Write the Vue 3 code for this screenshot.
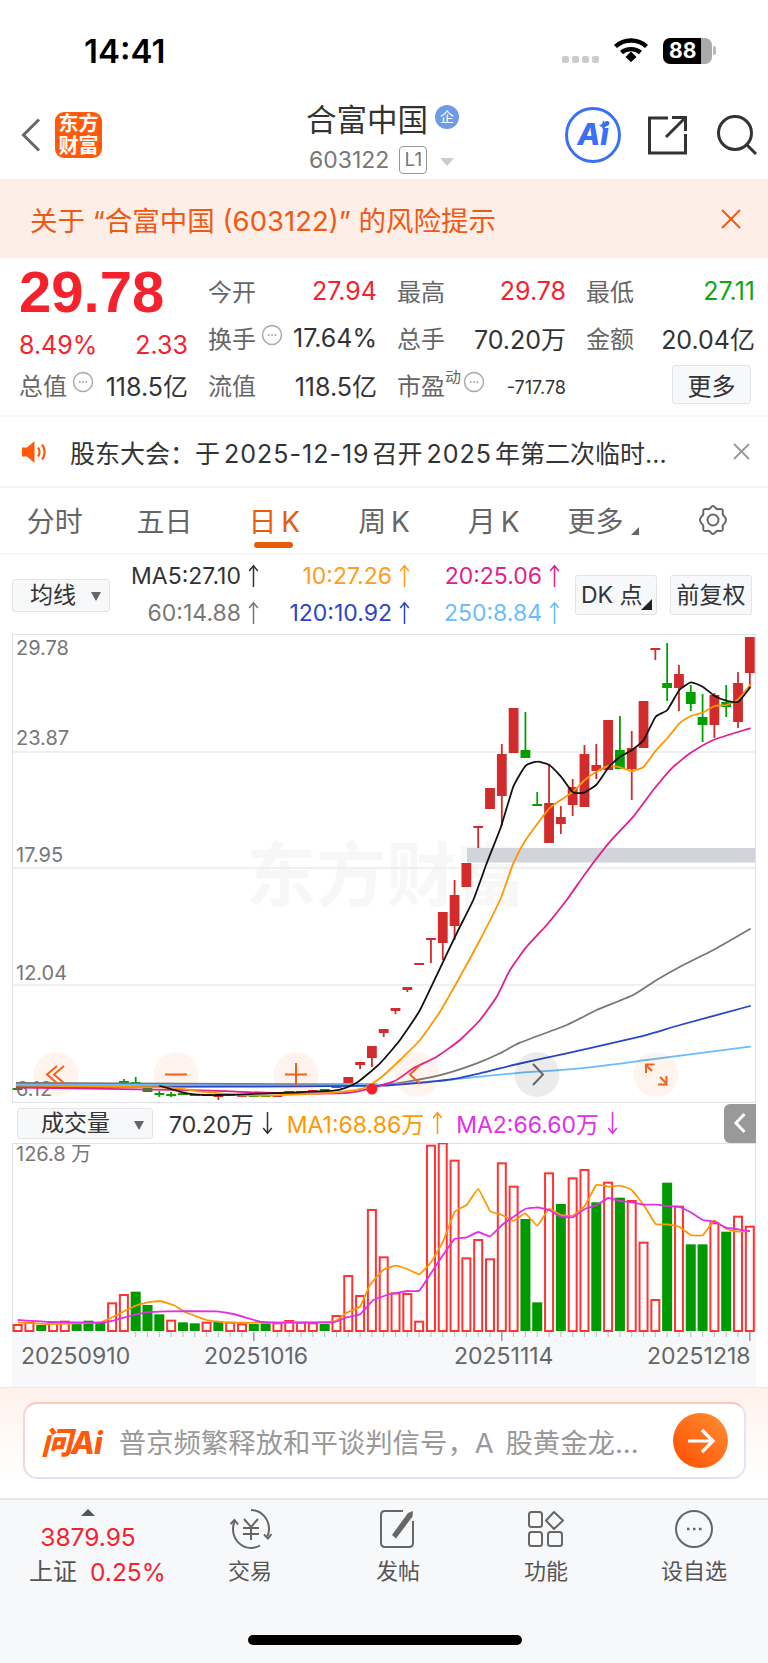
<template>
  <div class="page">
    <!-- 状态栏 -->
    <div class="status-bar">
      <span class="clock">14:41</span>
      <div class="status-right">
        <div class="signal"><i></i><i></i><i></i><i></i></div>
        <svg class="wifi" viewBox="0 0 34 24" width="34" height="24">
          <path d="M1.5 8.5C10 .5 24 .5 32.5 8.5" fill="none" stroke="#000" stroke-width="4.4" />
          <path d="M7.5 14.5C12.5 10 21.5 10 26.5 14.5" fill="none" stroke="#000" stroke-width="4.4" />
          <path d="M11.5 19 17 13.5 22.5 19 17 24.2Z" fill="#000" />
        </svg>
        <div class="battery"><span>88</span></div>
        <div class="battery-tip"></div>
      </div>
    </div>

    <!-- 顶部导航 -->
    <div class="nav">
      <div class="nav-left">
        <svg width="20" height="34" viewBox="0 0 20 34">
          <path d="M18 1.5 2.5 17 18 32.5" fill="none" stroke="#666" stroke-width="3" />
        </svg>
        <div class="brand">东方<br />财富</div>
      </div>
      <div class="nav-title">
        <div class="stock-name">
          合富中国<span class="badge-qi">企</span>
        </div>
        <div class="stock-code">
          603122<span class="badge-l1">L1</span><i class="code-tri"></i>
        </div>
      </div>
      <div class="nav-right">
        <div class="ai-btn">
          <span>Ai</span>
          <svg class="ai-star" width="9" height="11" viewBox="0 0 9 11"><path d="M4.5 0 6 4 9 5.500 6 7 4.500 11 3 7 0 5.500 3 4Z" fill="#3b6ff5" /></svg>
        </div>
        <svg class="share" width="40" height="40" viewBox="0 0 40 40">
          <path d="M21 3H2.500V38H38.500V19M19 22 38 3M25 2.500H38.500V16" fill="none" stroke="#333" stroke-width="3" />
        </svg>
        <svg class="search" width="42" height="42" viewBox="0 0 42 42">
          <circle cx="19" cy="19" r="16.500" fill="none" stroke="#333" stroke-width="3" />
          <path d="M31 31 40 40" stroke="#333" stroke-width="3" />
        </svg>
      </div>
    </div>

    <!-- 风险提示 -->
    <div class="risk">
      <span>关于 “合富中国 (603122)” 的风险提示</span>
      <svg width="20" height="20" viewBox="0 0 20 20">
        <path d="M1 1 19 19M19 1 1 19" stroke="#ee5a14" stroke-width="2" />
      </svg>
    </div>

    <!-- 行情数据 -->
    <div class="quote">
      <div class="price">29.78</div>
      <div class="cell"><span class="lb">今开</span><span class="red">27.94</span></div>
      <div class="cell"><span class="lb">最高</span><span class="red">29.78</span></div>
      <div class="cell"><span class="lb">最低</span><span class="green">27.11</span></div>

      <div class="cell change"><span class="red">8.49%</span><span class="red">2.33</span></div>
      <div class="cell">
        <span class="lb">换手<svg class="dots" width="22" height="22" viewBox="0 0 22 22"><circle cx="11" cy="11" r="9.500" fill="none" stroke="#aaa" stroke-width="1.500" /><path d="M7 11h1.500M10.300 11h1.500M13.600 11h1.500" stroke="#888" stroke-width="1.500" /></svg></span>
        <span class="val">17.64%</span>
      </div>
      <div class="cell"><span class="lb">总手</span><span class="val">70.20万</span></div>
      <div class="cell"><span class="lb">金额</span><span class="val">20.04亿</span></div>

      <div class="cell">
        <span class="lb">总值<svg class="dots" width="22" height="22" viewBox="0 0 22 22"><circle cx="11" cy="11" r="9.500" fill="none" stroke="#aaa" stroke-width="1.500" /><path d="M7 11h1.500M10.300 11h1.500M13.600 11h1.500" stroke="#888" stroke-width="1.500" /></svg></span>
        <span class="val">118.5亿</span>
      </div>
      <div class="cell"><span class="lb">流值</span><span class="val">118.5亿</span></div>
      <div class="cell">
        <span class="lb">市盈<sup>动</sup><svg class="dots tight" width="22" height="22" viewBox="0 0 22 22"><circle cx="11" cy="11" r="9.500" fill="none" stroke="#aaa" stroke-width="1.500" /><path d="M7 11h1.500M10.300 11h1.500M13.600 11h1.500" stroke="#888" stroke-width="1.500" /></svg></span>
        <span class="val small">-717.78</span>
      </div>
      <div class="cell end"><button class="more-btn">更多</button></div>
    </div>

    <!-- 公告 -->
    <div class="notice">
      <svg width="27" height="24" viewBox="0 0 27 24">
        <path d="M0 7.500H5L12.500 1V23L5 16.500H0Z" fill="#ff5a0a" />
        <path d="M16 7.500C18 10 18 14 16 16.500M20 4.500C23.500 8.500 23.500 15.500 20 19.500" fill="none" stroke="#ff5a0a" stroke-width="2.200" />
      </svg>
      <span class="notice-text">股东大会：于<b>2025-12-19</b>召开<b>2025</b>年第二次临时...</span>
      <svg width="17" height="17" viewBox="0 0 17 17">
        <path d="M1 1 16 16M16 1 1 16" stroke="#999" stroke-width="1.800" />
      </svg>
    </div>

    <!-- 周期切换 -->
    <div class="tabs">
      <div v-for="t in tabs" :key="t" class="tab" :class="{ active: t === '日 K' }">{{ t }}</div>
      <div class="tab more">更多<i class="corner"></i></div>
      <div class="tab">
        <svg width="32" height="32" viewBox="0 0 32 32">
          <path d="M16 2c1.800 0 2.400 2.400 4 3 1.700.600 3.900-.700 5.200.500 1.200 1.200 0 3.300.700 5 .700 1.700 3.100 2.600 3.100 5.500s-2.400 3.800-3.100 5.500c-.700 1.700.500 3.800-.700 5-1.300 1.200-3.500-.100-5.200.500-1.600.600-2.200 3-4 3s-2.400-2.400-4-3c-1.700-.600-3.900.700-5.200-.500-1.200-1.200 0-3.300-.700-5C5.400 19.800 3 18.900 3 16s2.400-3.800 3.100-5.500c.700-1.700-.500-3.800.700-5C8.100 4.300 10.300 5.600 12 5c1.600-.600 2.200-3 4-3Z" fill="none" stroke="#666" stroke-width="2" />
          <circle cx="16" cy="16" r="5.500" fill="none" stroke="#666" stroke-width="2" />
        </svg>
      </div>
    </div>

    <!-- 均线 -->
    <div class="ma-bar">
      <div class="select ma-select">均线<i class="sel-tri"></i></div>
      <div class="ma-grid">
        <span v-for="m in maValues" :key="m.text" class="ma-val" :style="{ color: m.color }">
          {{ m.text }}<svg class="arrow" width="11" height="24" viewBox="0 0 11 24"><path d="M5.500 23V2M1.200 7 5.500 1.800 9.800 7" fill="none" :stroke="m.color" stroke-width="1.500" /></svg>
        </span>
      </div>
      <div class="chip dk">DK 点<i class="corner dark"></i></div>
      <div class="chip">前复权</div>
    </div>

    <!-- K 线 -->
    <div class="k-wrap">
      <div class="watermark">东方财富</div>
      <svg class="canvas" width="744" height="469" viewBox="12 634 744 469">
        <line v-for="y in [752, 868, 985]" :key="y" x1="12" x2="756" :y1="y" :y2="y" stroke="#e9ebf0" stroke-width="1.500" />
        <rect x="467" y="848" width="288" height="14.500" fill="#d1d4da" />
        <text v-for="l in priceLabels" :key="l.t" x="16" :y="l.y" class="axis-text">{{ l.t }}</text>

        <g v-for="c in candles" :key="c.i">
          <line
            v-if="c.wt !== undefined"
            :x1="barX(c.i)" :x2="barX(c.i)" :y1="c.wt" :y2="c.wb"
            :stroke="c.g ? '#00a000' : '#d22b2b'" stroke-width="1.800"
          />
          <rect
            :x="barX(c.i) - 4.900" :y="c.t" width="9.800" :height="Math.max(c.b - c.t, 1.800)"
            :fill="c.g ? '#00a000' : '#d22b2b'"
          />
        </g>

        <!-- 左侧均线挤在一起，看起来是一条粗带 -->
        <rect x="17" y="1083" width="360" height="4" fill="#6bbcff" />
        <path v-for="l in kLines" :key="l.color" :d="l.d" fill="none" :stroke="l.color" :stroke-width="l.w" stroke-linejoin="round" stroke-linecap="round" />
        <circle cx="372" cy="1089" r="5.500" fill="#f5222d" />

        <!-- 缩放按钮 -->
        <circle v-for="b in ctrlBtns" :key="b.x" :cx="b.x" cy="1074.500" r="22.500" :fill="b.gray ? 'rgba(0,0,0,.08)' : 'rgba(255,100,30,.08)'" />
        <g fill="none" stroke="#f2601a" stroke-width="2">
          <path d="M57 1066 47 1074.500 57 1083M64 1066 54 1074.500 64 1083" />
          <path d="M165 1074.500H187" />
          <path d="M285 1074.500H307M296 1063V1085" />
          <path d="M420 1065 410 1074.500 420 1084" />
          <path d="M646 1065 652 1071M660 1077 666 1083M646 1073V1064.500H654.500M666.500 1076V1084.500H658" />
        </g>
        <path d="M533 1064 543 1074.500 533 1085" fill="none" stroke="#666" stroke-width="2" />
      </svg>
    </div>

    <!-- 成交量 -->
    <div class="vol-bar">
      <div class="select vol-select">成交量<i class="sel-tri"></i></div>
      <span v-for="v in volValues" :key="v.text" class="vol-item" :style="{ color: v.color }">
        {{ v.text }}<svg class="arrow" width="13" height="24" viewBox="0 0 13 24"><path v-if="v.up" d="M6.500 23V2M2.200 7 6.500 1.800 10.800 7" fill="none" :stroke="v.color" stroke-width="1.500" /><path v-else d="M6.500 1V22M2.200 17 6.500 22.200 10.800 17" fill="none" :stroke="v.color" stroke-width="1.500" /></svg>
      </span>
      <div class="collapse">
        <svg width="14" height="22" viewBox="0 0 14 22"><path d="M11.500 2 3 11 11.500 20" fill="none" stroke="#fff" stroke-width="3" /></svg>
      </div>
    </div>

    <div class="vol-wrap">
      <svg class="canvas" width="744" height="244" viewBox="12 1143 744 244">
        <rect x="12" y="1332" width="744" height="55" fill="#f7f8fa" />
        <text x="16" y="1161" class="axis-text">126.8 万</text>
        <g v-for="v in volumes" :key="v.i">
          <rect
            v-if="v.g"
            :x="barX(v.i) - 5" :y="v.top" width="10" :height="1331 - v.top" fill="#009a00"
          />
          <rect
            v-else
            :x="barX(v.i) - 4" :y="v.top" width="8" :height="1331 - v.top" fill="#fff" stroke="#ff3333" stroke-width="2"
          />
        </g>
        <path :d="volMa1" fill="none" stroke="#ff9800" stroke-width="1.800" stroke-linejoin="round" />
        <path :d="volMa2" fill="none" stroke="#e22ee8" stroke-width="1.800" stroke-linejoin="round" />
        <line
          v-for="t in ticks" :key="t"
          :x1="barX(t)" :x2="barX(t)" y1="1332" :y2="majorTicks.includes(t) ? 1341 : 1337"
          :stroke="majorTicks.includes(t) ? '#999' : '#bbb'" :stroke-width="majorTicks.includes(t) ? 1.500 : 1"
        />
        <text v-for="d in dates" :key="d.t" :x="d.x" y="1364" class="date-text">{{ d.t }}</text>
      </svg>
    </div>

    <!-- 问 Ai -->
    <div class="ask">
      <div class="ask-box">
        <span class="ask-logo">问Ai</span>
        <span class="ask-text">普京频繁释放和平谈判信号，A 股黄金龙...</span>
        <div class="ask-go">
          <svg width="30" height="28" viewBox="0 0 30 28">
            <path d="M2 14H27M16 3 27 14 16 25" fill="none" stroke="#fff" stroke-width="3.200" />
          </svg>
        </div>
      </div>
    </div>

    <!-- 底部栏 -->
    <div class="bottom">
      <div class="bottom-items">
        <div class="index">
          <i class="index-tri"></i>
          <div class="index-val">3879.95</div>
          <div class="index-row"><span class="lb2">上证</span><span class="red">0.25%</span></div>
        </div>
        <div class="b-item">
          <svg width="44" height="40" viewBox="0 0 44 40">
            <path d="M23 1c10 0 18 8.500 18 19 0 3-.600 5-1.600 7.500M32 36.500c-3 1.700-6 2.500-9 2.500-10 0-18-8.500-18-19 0-3 .500-5 1.500-7" fill="none" stroke="#666" stroke-width="2" />
            <path d="M2.500 15 6.500 11 10 15.500M36 25.500 40 29.500 43.500 25" fill="none" stroke="#666" stroke-width="2" />
            <path d="M16 10 23 18 30 10M15 19H31M15 25H31M23 18V31" fill="none" stroke="#666" stroke-width="2" />
          </svg>
          <span>交易</span>
        </div>
        <div class="b-item">
          <svg width="38" height="40" viewBox="0 0 38 40">
            <path d="M24 2H6C3.500 2 2 3.500 2 6V34C2 36.500 3.500 38 6 38H30C32.500 38 34 36.500 34 34V12" fill="none" stroke="#666" stroke-width="2" />
            <path d="M13 26 29 4 34 2 33.500 7.500 17 29.500Z" fill="#666" />
          </svg>
          <span>发帖</span>
        </div>
        <div class="b-item">
          <svg width="38" height="38" viewBox="0 0 38 38">
            <rect x="2" y="2" width="13" height="15" rx="2.500" fill="none" stroke="#666" stroke-width="2" />
            <path d="M27 2 36 10.500 27 19 19 10.500Z" fill="none" stroke="#666" stroke-width="2" stroke-linejoin="round" />
            <rect x="2" y="22" width="13" height="14" rx="2.500" fill="none" stroke="#666" stroke-width="2" />
            <rect x="21" y="22" width="14" height="14" rx="2.500" fill="none" stroke="#666" stroke-width="2" />
          </svg>
          <span>功能</span>
        </div>
        <div class="b-item">
          <svg width="40" height="40" viewBox="0 0 40 40">
            <circle cx="20" cy="20" r="18" fill="none" stroke="#666" stroke-width="2" />
            <path d="M13 20h2.500M19 20h2.500M25 20h2.500" stroke="#666" stroke-width="2.400" />
          </svg>
          <span>设自选</span>
        </div>
      </div>
      <div class="home-bar"></div>
    </div>
  </div>
</template>

<script setup>
const tabs = ['分时', '五日', '日 K', '周 K', '月 K']

const maValues = [
  { text: 'MA5:27.10', color: '#333' },
  { text: '10:27.26', color: '#ff9c1a' },
  { text: '20:25.06', color: '#e0218a' },
  { text: '60:14.88', color: '#777' },
  { text: '120:10.92', color: '#2a45c8' },
  { text: '250:8.84', color: '#6bbcff' }
]

const volValues = [
  { text: '70.20万', color: '#333', up: false },
  { text: 'MA1:68.86万', color: '#ff9800', up: true },
  { text: 'MA2:66.60万', color: '#e22ee8', up: false }
]

const priceLabels = [
  { t: '29.78', y: 655 },
  { t: '23.87', y: 745 },
  { t: '17.95', y: 862 },
  { t: '12.04', y: 980 },
  { t: '6.12', y: 1096 }
]

const ctrlBtns = [{ x: 56 }, { x: 176 }, { x: 296 }, { x: 417 }, { x: 537, gray: true }, { x: 656 }]

const barX = (i) => 17.6 + 11.81 * i

// t/b 是实体上下沿，wt/wb 是影线
const candles = [
  { i: 0, t: 1088, b: 1090, g: 1 }, { i: 9, t: 1081, b: 1083, wt: 1079, wb: 1084, g: 1 },
  { i: 10, t: 1082, b: 1083, wt: 1077, wb: 1083, g: 1 }, { i: 11, t: 1088, b: 1092, g: 1 },
  { i: 12, t: 1093, b: 1095, wt: 1091, wb: 1097, g: 1 }, { i: 13, t: 1094, b: 1096, wt: 1092, wb: 1097, g: 1 },
  { i: 14, t: 1093, b: 1095, g: 1 }, { i: 15, t: 1094, b: 1096, g: 1 },
  { i: 16, t: 1094, b: 1096 }, { i: 17, t: 1095, b: 1097, wt: 1095, wb: 1100 },
  { i: 18, t: 1094, b: 1096, g: 1 }, { i: 19, t: 1095, b: 1096 },
  { i: 20, t: 1095, b: 1097, g: 1 }, { i: 21, t: 1095, b: 1097, g: 1 },
  { i: 22, t: 1095, b: 1097 }, { i: 23, t: 1091, b: 1093 },
  { i: 24, t: 1091, b: 1093 }, { i: 25, t: 1090, b: 1092 },
  { i: 26, t: 1089, b: 1091, g: 1 }, { i: 27, t: 1086, b: 1088 },
  { i: 28, t: 1077, b: 1085 },
  { i: 29, t: 1062, b: 1065, wt: 1062, wb: 1069 },
  { i: 30, t: 1046, b: 1058, wt: 1046, wb: 1067 },
  { i: 31, t: 1029, b: 1033, wt: 1029, wb: 1037 },
  { i: 32, t: 1008, b: 1011, wt: 1008, wb: 1014 },
  { i: 33, t: 987, b: 990, wt: 987, wb: 992 },
  { i: 34, t: 963, b: 965 },
  { i: 35, t: 938, b: 940, wt: 939, wb: 963 },
  { i: 36, t: 912, b: 943, wt: 912, wb: 960 },
  { i: 37, t: 895, b: 926, wt: 880, wb: 940 },
  { i: 38, t: 863, b: 887 },
  { i: 39, t: 826, b: 828, wt: 827, wb: 848 },
  { i: 40, t: 788, b: 809 },
  { i: 41, t: 754, b: 796, wt: 744, wb: 826 },
  { i: 42, t: 708, b: 753 },
  { i: 43, t: 750, b: 758, wt: 712, wb: 750, g: 1 },
  { i: 44, t: 804, b: 806, wt: 792, wb: 805, g: 1 },
  { i: 45, t: 803, b: 843, wt: 765, wb: 843 },
  { i: 46, t: 817, b: 824, wt: 806, wb: 834 },
  { i: 47, t: 787, b: 805, wt: 779, wb: 816 },
  { i: 48, t: 754, b: 807, wt: 745, wb: 806 },
  { i: 49, t: 765, b: 771, wt: 744, wb: 779 },
  { i: 50, t: 720, b: 770 },
  { i: 51, t: 750, b: 769, wt: 716, wb: 750, g: 1 },
  { i: 52, t: 748, b: 769, wt: 731, wb: 800 },
  { i: 53, t: 701, b: 748 },
  { i: 54, t: 648, b: 650, wt: 649, wb: 660 },
  { i: 55, t: 683, b: 688, wt: 643, wb: 701, g: 1 },
  { i: 56, t: 674, b: 688, wt: 665, wb: 711 },
  { i: 57, t: 692, b: 704, wt: 685, wb: 711, g: 1 },
  { i: 58, t: 717, b: 725, wt: 694, wb: 742, g: 1 },
  { i: 59, t: 695, b: 725, wt: 693, wb: 738 },
  { i: 60, t: 702, b: 707, wt: 685, wb: 717, g: 1 },
  { i: 61, t: 683, b: 722, wt: 672, wb: 728 },
  { i: 62, t: 637, b: 673, wt: 673, wb: 688 }
]

// 截图裁剪坐标换算成页面坐标（3 倍）
const crop = (ox, oy, list) => list.map(([x, y]) => [ox + x / 3, oy + y / 3])
const z3 = (list) => crop(430, 630, list)
const z4 = (list) => crop(0, 900, list)
const z5 = (list) => crop(380, 900, list)

// k 越大曲线越接近折线
const smooth = (pts, k = 12) => {
  let d = `M${pts[0][0].toFixed(1)} ${pts[0][1].toFixed(1)}`
  for (let i = 0; i < pts.length - 1; i++) {
    const p0 = pts[i - 1] || pts[i]
    const p1 = pts[i]
    const p2 = pts[i + 1]
    const p3 = pts[i + 2] || p2
    const c1 = [p1[0] + (p2[0] - p0[0]) / k, p1[1] + (p2[1] - p0[1]) / k]
    const c2 = [p2[0] - (p3[0] - p1[0]) / k, p2[1] - (p3[1] - p1[1]) / k]
    d += `C${c1[0].toFixed(1)} ${c1[1].toFixed(1)} ${c2[0].toFixed(1)} ${c2[1].toFixed(1)} ${p2[0].toFixed(1)} ${p2[1].toFixed(1)}`
  }
  return d
}

const kLines = [
  {
    color: '#777', w: 1.8,
    d: smooth(z4([[50, 549], [700, 552]]).concat(z5([[0, 555], [110, 540], [200, 520], [290, 490], [360, 460], [420, 428], [560, 375], [650, 330], [760, 285], [830, 240], [900, 200], [1000, 150], [1110, 87]])))
  },
  {
    color: '#6bbcff', w: 1.8,
    d: smooth(z4([[50, 554], [700, 556]]).concat(z5([[0, 555], [200, 540], [400, 520], [600, 505], [800, 480], [1110, 440]])))
  },
  {
    color: '#2a45c8', w: 1.8,
    d: smooth(z4([[50, 561], [700, 560]]).concat(z5([[0, 557], [200, 540], [300, 520], [400, 495], [560, 460], [780, 410], [900, 375], [1110, 318]])))
  },
  {
    color: '#e0218a', w: 1.8,
    d: smooth(z4([[50, 563], [600, 571], [850, 580], [1050, 578]]).concat(z5([[40, 545], [100, 505], [170, 470], [240, 420], [300, 360], [350, 290], [390, 210], [440, 140], [500, 75], [560, 0]]), z3([[470, 725], [540, 635], [610, 560], [670, 480], [725, 415], [780, 370], [850, 330], [960, 295]])))
  },
  {
    color: '#ff9800', w: 1.8,
    d: smooth(z4([[50, 557], [500, 562], [600, 575], [780, 587], [1000, 578], [1090, 565]]).concat(z5([[0, 535], [60, 480], [120, 420], [180, 335], [240, 230], [300, 120], [360, 0]]), z3([[250, 700], [287, 630], [358, 535], [429, 485], [464, 450], [500, 425], [535, 408], [571, 412], [606, 423], [641, 410], [677, 362], [712, 325], [748, 280], [783, 258], [818, 248], [854, 228], [889, 225], [925, 208], [960, 165]])))
  },
  {
    color: '#111', w: 1.8,
    d: smooth(z4([[480, 558], [560, 580], [650, 585], [1000, 572], [1070, 548]]).concat(z5([[0, 490], [60, 420], [120, 330], [180, 205], [230, 100], [280, 0]]), z3([[170, 700], [213, 590], [250, 470], [287, 407], [322, 395], [358, 405], [393, 440], [429, 487], [464, 487], [500, 463], [535, 413], [571, 380], [606, 360], [641, 330], [677, 260], [712, 240], [748, 180], [783, 157], [818, 170], [854, 198], [889, 212], [925, 215], [960, 173]])))
  }
]

// 成交量柱顶（裁剪坐标），g 为绿柱
const volTops = [
  585, 578, 585, 578, 575, 580, 572, 578, 520, 495, 485, 525, 553, 572, 577, 580,
  578, 575, 578, 583, 582, 580, 580, 573, 578, 580, 582, 558, 438, 498, 240, 382,
  490, 492, 575, 47, 40, 92, 385, 330, 388, 100, 170, 267, 517, 130, 222, 145, 120,
  217, 158, 203, 213, 338, 510, 158, 230, 343, 343, 280, 305, 260, 290
]
const greenBars = [2, 5, 6, 7, 10, 11, 12, 14, 15, 17, 20, 21, 26, 43, 44, 46, 49, 51, 55, 57, 58, 60]

const volumes = volTops.map((t, i) => ({ i, top: 1130 + t / 3, g: greenBars.includes(i) }))

const z6 = (list) => crop(0, 1130, list)
const z7 = (list) => crop(380, 1130, list)

const volMa1 = smooth(z6([[53, 577], [150, 582], [300, 577], [340, 560], [400, 530], [440, 518], [480, 513], [520, 525], [560, 548], [620, 570], [680, 578], [800, 578], [1000, 575], [1040, 548], [1080, 530], [1110, 465], [1150, 420]]).concat(z7([[47, 407], [82, 417], [118, 433], [153, 397], [189, 335], [224, 245], [260, 225], [295, 177], [330, 243], [366, 255], [401, 272], [436, 250], [472, 287], [507, 237], [543, 255], [578, 257], [614, 228], [649, 165], [685, 170], [720, 167], [755, 180], [791, 225], [827, 282], [862, 283], [897, 290], [932, 315], [968, 316], [1003, 272], [1039, 297], [1074, 305], [1110, 302]])), 20)

const volMa2 = smooth(z6([[53, 570], [150, 576], [300, 578], [340, 572], [400, 555], [440, 547], [500, 544], [650, 544], [700, 552], [780, 575], [830, 578], [1000, 577], [1040, 562], [1080, 553], [1120, 510], [1170, 492]]).concat(z7([[47, 490], [82, 483], [118, 482], [153, 430], [189, 375], [224, 327], [260, 322], [295, 306], [330, 319], [366, 285], [401, 260], [436, 237], [472, 232], [507, 240], [543, 260], [578, 262], [614, 237], [649, 226], [685, 204], [720, 213], [755, 217], [791, 224], [827, 224], [862, 228], [897, 230], [932, 247], [968, 270], [1003, 275], [1039, 293], [1074, 298], [1110, 304]])), 20)

const ticks = Array.from({ length: 53 }, (_, k) => k + 10)
const majorTicks = [20, 41, 62]

const dates = [
  { t: '20250910', x: 21 },
  { t: '20251016', x: 204 },
  { t: '20251114', x: 454 },
  { t: '20251218', x: 647 }
]
</script>

<style scoped>
.page {
  width: 768px;
  height: 1663px;
  overflow: hidden;
  background: #fff;
  font-family: Inter, 'Noto Sans CJK SC', sans-serif;
  color: #333;
  display: flex;
  flex-direction: column;
}

.status-bar {
  height: 100px;
  flex: none;
  display: flex;
  justify-content: space-between;
  padding: 36px 52px 0 84px;
  box-sizing: border-box;
}

.clock {
  font-size: 33px;
  font-weight: 600;
  line-height: 30px;
  color: #000;
}

.status-right {
  display: flex;
  align-items: flex-start;
}

.signal {
  display: flex;
  gap: 3px;
  margin: 20px 15px 0 0;
}

.signal i {
  width: 7px;
  height: 7px;
  border-radius: 2px;
  background: #ccc;
}

.wifi {
  margin: 2px 15px 0 0;
}

.battery {
  width: 49px;
  height: 26px;
  margin-top: 2px;
  border-radius: 7px;
  background: linear-gradient(90deg, #000 78%, #aaa 78%);
  color: #fff;
  font-size: 21px;
  font-weight: 700;
  line-height: 26px;
  padding-left: 6px;
  box-sizing: border-box;
}

.battery-tip {
  width: 3px;
  height: 9px;
  margin: 10px 0 0 1px;
  background: #bbb;
  border-radius: 0 2px 2px 0;
}

.nav {
  height: 80px;
  flex: none;
  position: relative;
  display: flex;
  justify-content: space-between;
  align-items: flex-start;
  border-bottom: 1px solid #eee;
  box-sizing: border-box;
}

.nav-left {
  display: flex;
  align-items: center;
  padding: 12px 0 0 21px;
  gap: 14px;
}

.brand {
  width: 47px;
  height: 46px;
  border-radius: 9px;
  background: #ff5a0a;
  color: #fff;
  font-size: 20px;
  font-weight: 700;
  line-height: 22px;
  text-align: center;
  padding-top: 1px;
  box-sizing: border-box;
}

.nav-title {
  position: absolute;
  left: 306px;
  top: 3px;
}

.stock-name {
  display: flex;
  align-items: center;
  font-size: 30.500px;
  line-height: 34px;
  color: #333;
}

.badge-qi {
  width: 24px;
  height: 24px;
  margin: -6px 0 0 7px;
  border-radius: 50%;
  background: #6f9be8;
  color: #fff;
  font-size: 14px;
  line-height: 24px;
  text-align: center;
}

.stock-code {
  display: flex;
  align-items: center;
  margin-top: 9px;
  padding-left: 3px;
  font-size: 23px;
  line-height: 28px;
  color: #777;
}

.badge-l1 {
  width: 28px;
  height: 28px;
  margin-left: 10px;
  border: 1px solid #999;
  border-radius: 4px;
  box-sizing: border-box;
  font-size: 19px;
  line-height: 26px;
  text-align: center;
}

.code-tri {
  width: 0;
  height: 0;
  margin: 4px 0 0 13px;
  border-left: 7px solid transparent;
  border-right: 7px solid transparent;
  border-top: 8px solid #ccc;
}

.nav-right {
  display: flex;
  align-items: center;
  gap: 28px;
  padding: 7px 10px 0 0;
}

.share {
  margin-left: -2px;
}

.search {
  margin-left: 1px;
}

.ai-btn {
  position: relative;
  width: 56px;
  height: 56px;
  border: 3px solid #3b6ff5;
  border-radius: 50%;
  box-sizing: border-box;
  color: #3b6ff5;
  font-size: 30px;
  font-weight: 800;
  font-style: italic;
  line-height: 48px;
  text-align: center;
}

.ai-star {
  position: absolute;
  right: 10px;
  top: 10px;
}

.risk {
  height: 78px;
  flex: none;
  padding: 0 27px 0 30px;
  background: #fdeee7;
  color: #ee5a14;
  font-size: 27.500px;
  display: flex;
  align-items: center;
  justify-content: space-between;
}

.quote {
  height: 159px;
  flex: none;
  box-sizing: border-box;
  padding: 9px 13px 0 19px;
  display: grid;
  grid-template-columns: 169px 169px 169px 169px;
  grid-auto-rows: 47px;
  column-gap: 20px;
  border-bottom: 2px solid #f6f6f6;
  font-size: 25px;
}

.price {
  font-size: 58px;
  line-height: 50px;
  color: #f5222d;
  font-family: 'Liberation Sans', sans-serif;
  font-weight: 700;
}

.cell {
  display: flex;
  align-items: center;
  justify-content: space-between;
  white-space: nowrap;
}

.cell.end {
  justify-content: flex-end;
  padding-right: 4px;
}

.change {
  padding-top: 14px;
  box-sizing: border-box;
}

.lb {
  display: flex;
  color: #666;
  font-size: 24px;
  align-items: center;
  position: relative;
}

.lb sup {
  font-size: 16px;
  margin-top: -16px;
  line-height: 16px;
  color: #666;
}

.dots {
  margin: -6px 0 0 5px;
}

.dots.tight {
  margin-left: 2px;
}

.red {
  color: #f5222d;
}

.green {
  color: #14a514;
}

.val {
  color: #333;
}

.val.small {
  font-size: 18px;
  padding-top: 6px;
}

.more-btn {
  width: 79px;
  height: 39px;
  padding: 0;
  background: #f7f8fa;
  border: 1px solid #e2e4e8;
  border-radius: 3px;
  color: #333;
  font: inherit;
  font-size: 24px;
}

.notice {
  height: 71px;
  flex: none;
  box-sizing: border-box;
  padding: 0 18px 0 22px;
  display: flex;
  align-items: center;
  border-bottom: 2px solid #f6f6f6;
}

.notice-text {
  flex: 1;
  margin-left: 21px;
  font-size: 25px;
  color: #333;
  white-space: nowrap;
}

.notice-text b {
  font-weight: 400;
  letter-spacing: 1px;
  margin: 0 3px 0 4px;
}

.tabs {
  height: 67px;
  flex: none;
  box-sizing: border-box;
  display: grid;
  grid-template-columns: repeat(7, 1fr);
  border-bottom: 2px solid #f6f6f6;
}

.tab {
  position: relative;
  display: flex;
  align-items: center;
  justify-content: center;
  padding-bottom: 1px;
  font-size: 28px;
  word-spacing: -3px;
  color: #666;
}

.tab.active {
  color: #e85a0c;
}

.tab.active::after {
  content: '';
  position: absolute;
  left: 35px;
  bottom: 5px;
  width: 39px;
  height: 6px;
  border-radius: 3px;
  background: #e85a0c;
}

.corner {
  width: 0;
  height: 0;
  margin: 22px 0 0 8px;
  border-left: 8px solid transparent;
  border-bottom: 8px solid #666;
}

.corner.dark {
  position: absolute;
  right: 4px;
  bottom: 4px;
  margin: 0;
  border-left: 11px solid transparent;
  border-bottom: 11px solid #222;
}

.ma-bar {
  height: 79px;
  flex: none;
  display: flex;
  align-items: center;
  padding-left: 12px;
}

.select {
  position: relative;
  background: #f7f8fa;
  border: 1px solid #e2e4e8;
  border-radius: 3px;
  box-sizing: border-box;
  color: #333;
}

.ma-select {
  width: 98px;
  height: 33px;
  margin-top: 1px;
  padding-left: 17px;
  font-size: 23px;
  line-height: 31px;
}

.sel-tri {
  position: absolute;
  right: 8px;
  top: 12px;
  width: 0;
  height: 0;
  border-left: 5px solid transparent;
  border-right: 5px solid transparent;
  border-top: 9px solid #666;
}

.ma-grid {
  display: grid;
  grid-template-columns: 149px 151px 150px;
  grid-auto-rows: 37px;
  align-items: center;
  font-size: 23px;
  white-space: nowrap;
}

.ma-val {
  display: flex;
  align-items: center;
  justify-content: flex-end;
}

.arrow {
  flex: none;
  margin-left: 7px;
}

.chip {
  position: relative;
  width: 82px;
  height: 40px;
  margin: 0 0 0 13px;
  background: #f7f8fa;
  border: 1px solid #e2e4e8;
  border-radius: 3px;
  box-sizing: border-box;
  font-size: 23px;
  line-height: 38px;
  text-align: center;
}

.chip.dk {
  margin-left: 15px;
  text-align: left;
  padding-left: 5px;
  white-space: nowrap;
}

.k-wrap {
  position: relative;
  width: 744px;
  height: 469px;
  flex: none;
  margin-left: 12px;
}

.canvas {
  position: relative;
  display: block;
  box-shadow: inset 1px 1px 0 #dfe1e6, inset -1px -1px 0 #dfe1e6;
}

.watermark {
  position: absolute;
  left: 234px;
  top: 186px;
  font-size: 70px;
  font-weight: 700;
  color: #f7f7f7;
  white-space: nowrap;
}

.axis-text {
  font-size: 20px;
  fill: #777;
}

.date-text {
  font-size: 23px;
  fill: #666;
}

.vol-bar {
  height: 40px;
  flex: none;
  display: flex;
  align-items: center;
  padding: 0 12px 0 17px;
  font-size: 23px;
  white-space: nowrap;
}

.vol-select {
  width: 136px;
  height: 31px;
  padding-left: 23px;
  font-size: 23px;
  line-height: 29px;
}

.vol-item {
  display: flex;
  align-items: center;
  margin-left: 16px;
}

.vol-item:nth-child(3) {
  margin-left: 13px;
}

.vol-item:nth-child(4) {
  margin-left: 12px;
}

.collapse {
  width: 32px;
  height: 39px;
  margin-left: auto;
  border-radius: 6px 0 0 6px;
  background: #999;
  display: flex;
  align-items: center;
  justify-content: center;
}

.vol-wrap {
  width: 744px;
  height: 244px;
  flex: none;
  margin-left: 12px;
}

.ask {
  height: 111px;
  flex: none;
  box-sizing: border-box;
  padding: 14px 22px 0 23px;
  background: linear-gradient(180deg, #fff1ec 0%, #fff 80%);
  border-top: 1px solid #e8e8ec;
}

.ask-box {
  height: 77px;
  box-sizing: border-box;
  border: 2px solid;
  border-color: #fcc8bc #e3e6f2 #dde4f5 #f3d6d6;
  border-radius: 14px;
  background: #fff;
  display: flex;
  align-items: center;
  padding: 0 16px;
}

.ask-logo {
  font-size: 31px;
  font-weight: 800;
  font-style: italic;
  color: #ff5a0a;
  letter-spacing: -1px;
  white-space: nowrap;
}

.ask-text {
  flex: 1;
  margin-left: 17px;
  font-size: 27.400px;
  word-spacing: 4px;
  color: #999;
  white-space: nowrap;
}

.ask-go {
  width: 55px;
  height: 55px;
  flex: none;
  border-radius: 50%;
  background: linear-gradient(45deg, #ff4d00, #ff8f33);
  display: flex;
  align-items: center;
  justify-content: center;
}

.bottom {
  flex: 1;
  position: relative;
  background: #f7f8fa;
  border-top: 2px solid #e6e7ea;
}

.bottom-items {
  display: flex;
  height: 95px;
  padding-left: 29px;
}

.index {
  width: 147px;
  flex: none;
  position: relative;
  font-size: 24.500px;
}

.index-tri {
  display: block;
  width: 0;
  height: 0;
  margin: 9px 0 0 52px;
  border-left: 7px solid transparent;
  border-right: 7px solid transparent;
  border-bottom: 7px solid #555;
}

.index-val {
  width: 118px;
  margin-top: 7px;
  color: #f5222d;
  line-height: 28px;
  text-align: center;
}

.index-row {
  display: flex;
  gap: 13px;
  margin-top: 3px;
  line-height: 36px;
  white-space: nowrap;
}

.lb2 {
  color: #555;
  font-size: 24px;
}

.b-item {
  flex: none;
  width: 148px;
  display: flex;
  flex-direction: column;
  align-items: center;
  font-size: 22px;
  color: #555;
  padding-top: 9px;
  height: 90px;
  box-sizing: border-box;
}

.b-item svg {
  height: 40px;
  margin-bottom: 4px;
}

.home-bar {
  position: absolute;
  left: 248px;
  top: 135px;
  width: 274px;
  height: 10px;
  border-radius: 5px;
  background: #000;
}
</style>

<style>
html,
body {
  margin: 0;
  background: #fff;
}
</style>
